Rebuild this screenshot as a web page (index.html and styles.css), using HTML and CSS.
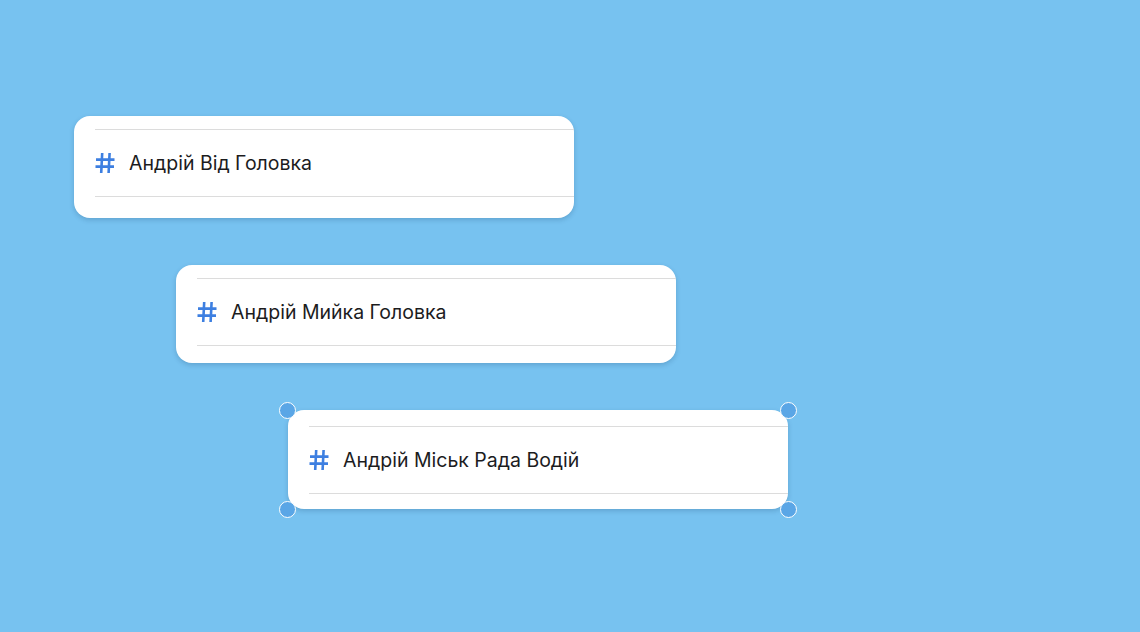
FILE: index.html
```html
<!DOCTYPE html>
<html lang="uk">
<head>
<meta charset="utf-8">
<link rel="stylesheet" href="styles.css">
</head>
<body>
<div class="canvas">
  <div class="card card-1">
    <div class="row">
      <svg class="hash" viewBox="0 0 20 22" width="20" height="22"><path d="M7.2 1 L6.2 21 M14.6 1 L13.6 21 M1 7.6 H19.5 M0.5 14.6 H19" stroke="#3d7fe1" stroke-width="2.6" fill="none"/></svg>
      <span class="label">Андрій Від Головка</span>
    </div>
  </div>
  <div class="card card-2">
    <div class="row">
      <svg class="hash" viewBox="0 0 20 22" width="20" height="22"><path d="M7.2 1 L6.2 21 M14.6 1 L13.6 21 M1 7.6 H19.5 M0.5 14.6 H19" stroke="#3d7fe1" stroke-width="2.6" fill="none"/></svg>
      <span class="label">Андрій Мийка Головка</span>
    </div>
  </div>
  <div class="card card-3 selected">
    <div class="row">
      <svg class="hash" viewBox="0 0 20 22" width="20" height="22"><path d="M7.2 1 L6.2 21 M14.6 1 L13.6 21 M1 7.6 H19.5 M0.5 14.6 H19" stroke="#3d7fe1" stroke-width="2.6" fill="none"/></svg>
      <span class="label">Андрій Міськ Рада Водій</span>
    </div>
    <span class="handle tl"></span>
    <span class="handle tr"></span>
    <span class="handle bl"></span>
    <span class="handle br"></span>
  </div>
</div>
</body>
</html>
```
FILE: styles.css
```css
html, body {
  margin: 0;
  padding: 0;
  background: #77c2f0;
  width: 1140px;
  height: 632px;
  overflow: hidden;
  font-family: "Inter", "Noto Sans", sans-serif;
}
.canvas {
  display: flex;
  flex-direction: column;
  align-items: flex-start;
  gap: 47px;
  padding-top: 116px;
}
.card {
  position: relative;
  box-sizing: border-box;
  width: 500px;
  height: 100px;
  background: #fff;
  border-radius: 16px;
  box-shadow: 0 2px 5px rgba(20, 60, 100, 0.22);
  padding: 13px 0 0 21px;
}
.card-1 { margin-left: 74px; height: 102px; padding-top: 13px; }
.card-2 { margin-left: 176px; height: 98px; padding-top: 13px; }
.card-3 { margin-left: 288px; height: 99px; padding-top: 16px; }
.row {
  display: flex;
  align-items: center;
  height: 68px;
  box-sizing: border-box;
  border-top: 1px solid #dcdcdc;
  border-bottom: 1px solid #dcdcdc;
}
.hash {
  flex: none;
  margin-right: 14px;
}
.label {
  font-size: 19.5px;
  color: #1c1c1e;
  letter-spacing: 0;
}
.handle {
  position: absolute;
  width: 15px;
  height: 15px;
  border-radius: 50%;
  background: #5aa6e6;
  border: 1px solid #fff;
}
.handle.tl { left: -9px; top: -8px; }
.handle.tr { right: -9px; top: -8px; }
.handle.bl { left: -9px; bottom: -9px; }
.handle.br { right: -9px; bottom: -9px; }
```
